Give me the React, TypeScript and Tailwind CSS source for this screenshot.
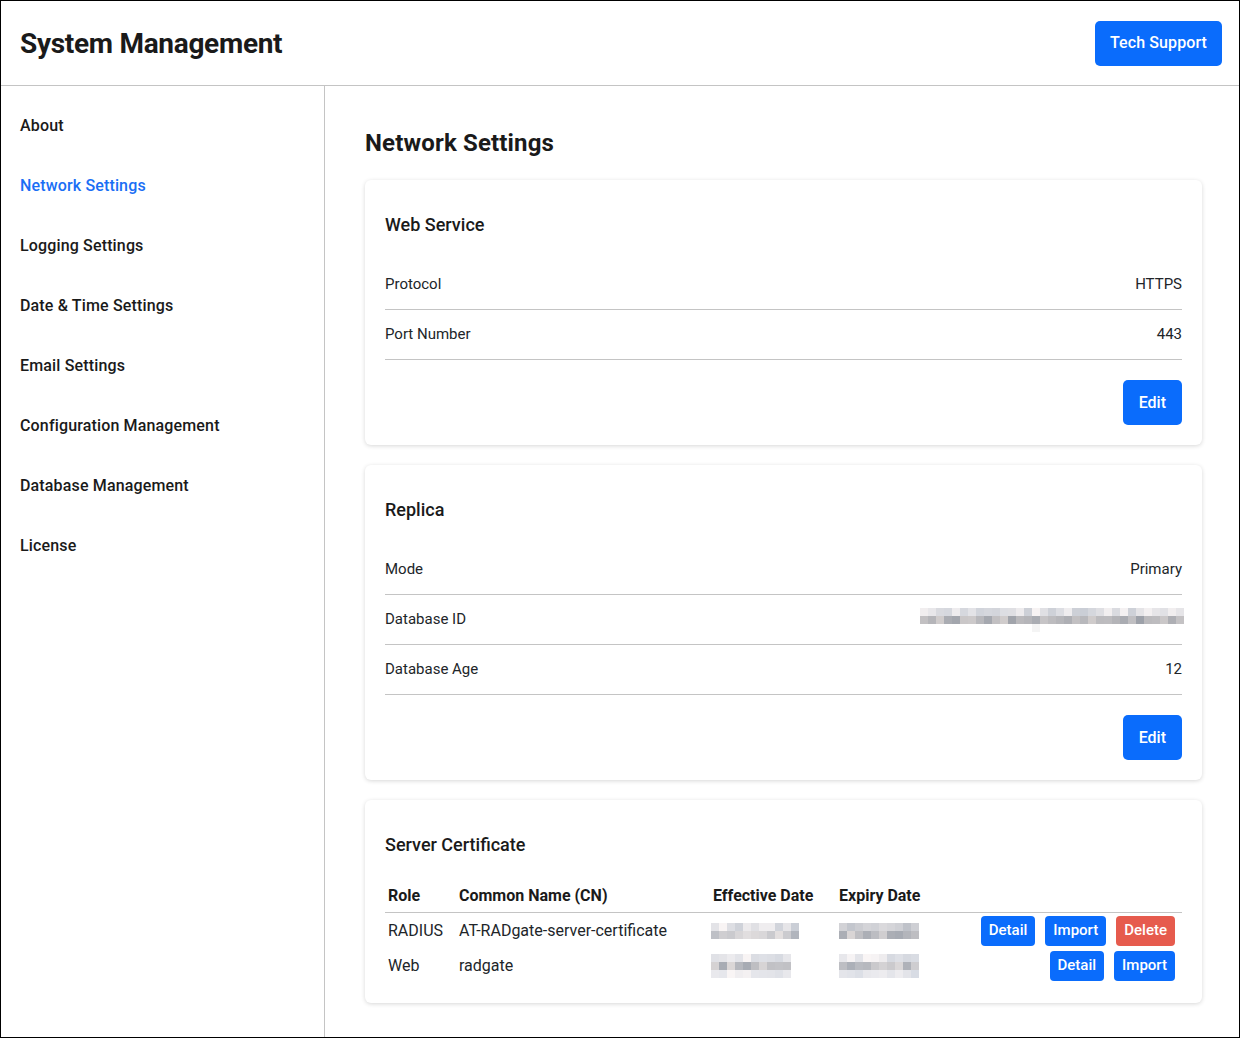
import React from "react"

const font = "font-['Roboto','Liberation_Sans',sans-serif]"

const navItems = [
    "About",
    "Network Settings",
    "Logging Settings",
    "Date & Time Settings",
    "Email Settings",
    "Configuration Management",
    "Database Management",
    "License",
]

// deterministic grey used for the pixelated (redacted) values
function shade(seed: number, base: number, spread: number) {
    const x = Math.sin(seed * 12.9898) * 43758.5453
    const r = x - Math.floor(x)
    const v = Math.round(base + r * spread)
    const tint = Math.round((r - 0.5) * 8)
    return `rgb(${v + tint},${v},${v - tint + 4})`
}

type BlurProps = { cols: number; rows: number[]; seed: number; extra?: number }

// rows: base grey per row (higher = lighter)
const Blurred: React.FC<BlurProps> = ({ cols, rows, seed, extra }) => (
    <div className="flex flex-col">
        {rows.map((base, r) => (
            <div key={r} className="flex">
                {Array.from({ length: cols }).map((_, c) => (
                    <span
                        key={c}
                        className="block h-[8px] w-[8px]"
                        style={{ background: shade(seed + r * 97 + c * 7, base, Math.min(45, 245 - base)) }}
                    />
                ))}
            </div>
        ))}
        {extra !== undefined && (
            <div className="flex">
                <span className="block h-[8px] w-[8px]" style={{ marginLeft: extra * 8, background: "#f4f4f4" }} />
            </div>
        )}
    </div>
)

const Btn: React.FC<{ children: React.ReactNode; red?: boolean; small?: boolean }> = ({ children, red, small }) => (
    <button
        className={
            (small
                ? "h-[30px] px-2 text-[15px] rounded-[4px] "
                : "h-[45px] px-4 text-[16px] rounded-[5px] ") +
            (red ? "bg-[#e65b4d] " : "bg-[#0a6cfc] ") +
            "font-medium text-white leading-none"
        }
    >
        {children}
    </button>
)

const Card: React.FC<{ title: string; children: React.ReactNode }> = ({ title, children }) => (
    <div className="rounded-md bg-white p-5 shadow-[0_1px_4px_rgba(0,0,0,0.16)]">
        <h3 className="pt-[11px] pb-[21px] text-[18px] leading-[28px] font-medium text-[#1a1a1a]">{title}</h3>
        {children}
    </div>
)

const Row: React.FC<{ label: string; children: React.ReactNode }> = ({ label, children }) => (
    <div className="flex h-[50px] items-center justify-between border-b border-[#c4c4c4] text-[15px] text-[#212529]">
        <span>{label}</span>
        <span>{children}</span>
    </div>
)

export default function App() {
    return (
        <div className={`${font} flex h-[1038px] w-[1240px] flex-col border border-black bg-white text-[#212529]`}>
            {/* Header */}
            <header className="flex h-[85px] flex-shrink-0 items-center justify-between border-b border-[#c4c4c4] pl-[19px] pr-[17px]">
                <h1 className="pt-[2px] text-[28px] font-bold tracking-[-0.3px] text-[#1a1a1a]">System Management</h1>
                <button className="h-[45px] rounded-[5px] bg-[#0a6cfc] px-[15px] text-[16px] font-medium tracking-[0.1px] text-white">
                    Tech Support
                </button>
            </header>

            <div className="flex flex-1 overflow-hidden">
                {/* Sidebar */}
                <nav className="w-[324px] flex-shrink-0 border-r border-[#c4c4c4] pt-[10px] pl-[19px]">
                    {navItems.map((item) => (
                        <div
                            key={item}
                            className={
                                "flex h-[60px] items-center text-[16px] font-medium tracking-[0.15px] " +
                                (item === "Network Settings" ? "text-[#1a6ef5]" : "text-[#1a1a1a]")
                            }
                        >
                            {item}
                        </div>
                    ))}
                </nav>

                {/* Main */}
                <main className="flex-1 pt-[43px] pl-10 pr-[37px]">
                    <h2 className="mb-[23px] text-[24px] leading-[28px] font-bold tracking-[0.15px] text-[#1a1a1a]">
                        Network Settings
                    </h2>

                    <div className="flex flex-col gap-5">
                        <Card title="Web Service">
                            <Row label="Protocol">HTTPS</Row>
                            <Row label="Port Number">443</Row>
                            <div className="mt-5 flex justify-end">
                                <Btn>Edit</Btn>
                            </div>
                        </Card>

                        <Card title="Replica">
                            <Row label="Mode">Primary</Row>
                            <div className="flex h-[50px] items-center justify-between border-b border-[#c4c4c4] text-[15px]">
                                <span>Database ID</span>
                                <span className="mr-[-2px]">
                                    <Blurred cols={33} rows={[205, 160]} seed={11} extra={14} />
                                </span>
                            </div>
                            <Row label="Database Age">12</Row>
                            <div className="mt-5 flex justify-end">
                                <Btn>Edit</Btn>
                            </div>
                        </Card>

                        <Card title="Server Certificate">
                            <div className="grid grid-cols-[71px_254px_126px_130px_1fr] text-[16px]">
                                {/* header */}
                                <div className="col-span-5 grid h-[33px] grid-cols-subgrid items-center border-b border-[#c4c4c4] font-bold text-[#1a1a1a]">
                                    <span className="pl-[3px]">Role</span>
                                    <span className="pl-[3px]">Common Name (CN)</span>
                                    <span className="pl-[3px]">Effective Date</span>
                                    <span className="pl-[3px]">Expiry Date</span>
                                    <span />
                                </div>

                                <div className="col-span-5 grid h-[35px] grid-cols-subgrid items-center">
                                    <span className="pl-[3px]">RADIUS</span>
                                    <span className="pl-[3px]">AT-RADgate-server-certificate</span>
                                    <span className="pl-[1px]">
                                        <Blurred cols={11} rows={[205, 180]} seed={3} />
                                    </span>
                                    <span className="pl-[3px]">
                                        <Blurred cols={10} rows={[190, 170]} seed={5} />
                                    </span>
                                    <div className="flex justify-end gap-[10px] pr-[7px]">
                                        <Btn small>Detail</Btn>
                                        <Btn small>Import</Btn>
                                        <Btn small red>Delete</Btn>
                                    </div>
                                </div>

                                <div className="col-span-5 grid h-[35px] grid-cols-subgrid items-center">
                                    <span className="pl-[3px]">Web</span>
                                    <span className="pl-[3px]">radgate</span>
                                    <span className="pl-[1px]">
                                        <Blurred cols={10} rows={[215, 170, 220]} seed={8} />
                                    </span>
                                    <span className="pl-[3px]">
                                        <Blurred cols={10} rows={[215, 175, 220]} seed={9} />
                                    </span>
                                    <div className="flex justify-end gap-[10px] pr-[7px]">
                                        <Btn small>Detail</Btn>
                                        <Btn small>Import</Btn>
                                    </div>
                                </div>
                            </div>
                        </Card>
                    </div>
                </main>
            </div>
        </div>
    )
}
